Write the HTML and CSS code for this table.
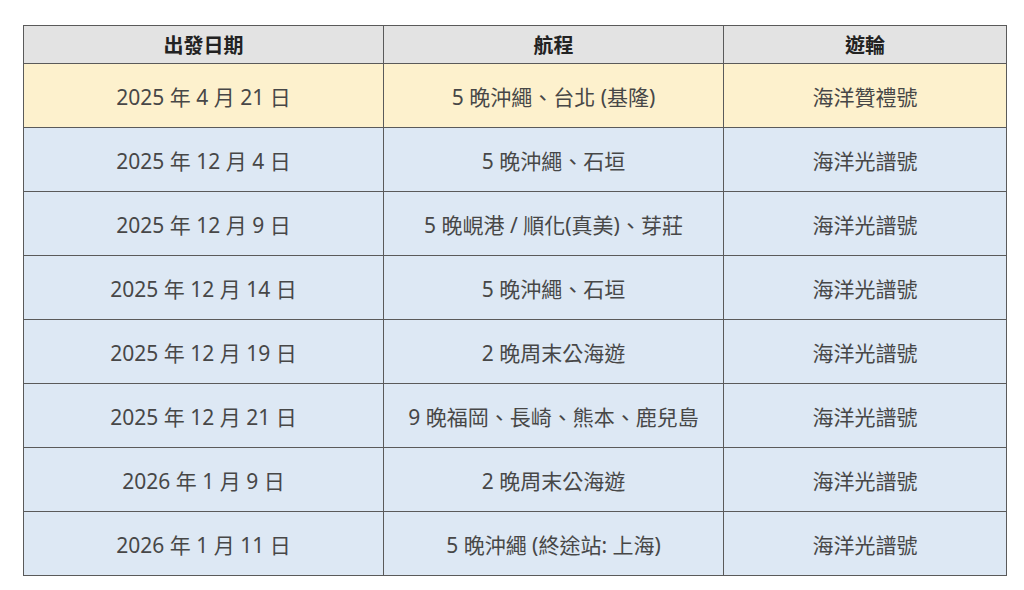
FILE: index.html
```html
<!DOCTYPE html>
<html lang="zh-Hant">
<head>
<meta charset="utf-8">
<title>航程表</title>
<link rel="stylesheet" href="styles.css">
</head>
<body>
<table class="sched">
  <colgroup>
    <col class="c1"><col class="c2"><col class="c3">
  </colgroup>
  <thead>
    <tr><th>出發日期</th><th>航程</th><th>遊輪</th></tr>
  </thead>
  <tbody>
    <tr class="hl"><td>2025 年 4 月 21 日</td><td>5 晚沖繩、台北 (基隆)</td><td>海洋贊禮號</td></tr>
    <tr><td>2025 年 12 月 4 日</td><td>5 晚沖繩、石垣</td><td>海洋光譜號</td></tr>
    <tr><td>2025 年 12 月 9 日</td><td>5 晚峴港 / 順化(真美)、芽莊</td><td>海洋光譜號</td></tr>
    <tr><td>2025 年 12 月 14 日</td><td>5 晚沖繩、石垣</td><td>海洋光譜號</td></tr>
    <tr><td>2025 年 12 月 19 日</td><td>2 晚周末公海遊</td><td>海洋光譜號</td></tr>
    <tr><td>2025 年 12 月 21 日</td><td>9 晚福岡、長崎、熊本、鹿兒島</td><td>海洋光譜號</td></tr>
    <tr><td>2026 年 1 月 9 日</td><td>2 晚周末公海遊</td><td>海洋光譜號</td></tr>
    <tr><td>2026 年 1 月 11 日</td><td>5 晚沖繩 (終途站: 上海)</td><td>海洋光譜號</td></tr>
  </tbody>
</table>
</body>
</html>
```
FILE: styles.css
```css
html, body {
  margin: 0;
  padding: 0;
  background: #ffffff;
}
body {
  padding: 25px 0 0 23px;
  font-family: "Noto Sans", "Noto Sans CJK TC", sans-serif;
}
.sched {
  border-collapse: collapse;
  table-layout: fixed;
  width: 983px;
}
.c1 { width: 360px; }
.c2 { width: 340px; }
.c3 { width: 283px; }
.sched th, .sched td {
  border: 1px solid #5a5a5a;
  text-align: center;
  padding: 0;
}
.sched th {
  height: 37px;
  background: #e3e3e3;
  color: #222;
  font-size: 20px;
  font-weight: 700;
}
.sched td {
  height: 63px;
  background: #dde8f4;
  color: #474747;
  font-size: 21px;
}
.sched tr.hl td {
  background: #fdf1cd;
}
```
